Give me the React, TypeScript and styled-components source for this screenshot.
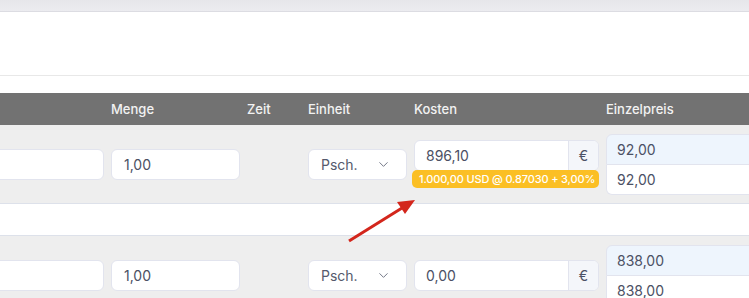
import React from 'react'
import styled, { createGlobalStyle } from 'styled-components'
import { ChevronDown } from 'lucide-react'

const Global = createGlobalStyle`
  html, body {
    margin: 0;
    padding: 0;
    background: #ffffff;
    overflow: hidden;
    font-family: Inter, "Noto Sans", sans-serif;
  }
`;

const Page = styled.div`
  position: relative;
  width: 749px;
  height: 298px;
  overflow: hidden;
`;

const TopBar = styled.div`
  height: 11px;
  background: linear-gradient(#e6e6ea, #ececf0);
  border-bottom: 1px solid #dcdce2;
`;

const Toolbar = styled.div`
  height: 63px;
  border-bottom: 1px solid #e8e8e8;
`;

const Spacer = styled.div`
  height: 17px;
`;

const Table = styled.div`
  margin-left: -20px;
`;

const Grid = styled.div<{ $height: number }>`
  display: grid;
  grid-template-columns: 124px 129px 54px 99px 185px 175px;
  column-gap: 7px;
  align-items: center;
  height: ${p => p.$height}px;
`;

const HeaderRow = styled(Grid)`
  background: #727272;
  color: #f2f2f2;
  font-size: 13px;
  font-weight: 500;
`;

const BodyRow = styled(Grid)`
  background: #eeeeee;
`;

const Band = styled.div`
  height: 31px;
  background: #ffffff;
  border-top: 1px solid #dde1ea;
  border-bottom: 1px solid #dde1ea;
`;

const Field = styled.div<{ $tint?: boolean }>`
  box-sizing: border-box;
  height: 31px;
  display: flex;
  align-items: center;
  padding: 0 12px;
  background: ${p => (p.$tint ? '#eef5fd' : '#ffffff')};
  border: 1px solid #e2e4ee;
  border-radius: 6px;
  color: #4b5064;
  font-size: 14px;
`;

const Select = styled(Field)`
  justify-content: space-between;
  padding-right: 15px;
  color: #555a6c;
  svg {
    color: #6b7080;
  }
`;

const Cost = styled.div`
  display: flex;
  flex-direction: column;
`;

const Group = styled.div`
  display: flex;
  height: 31px;
  box-sizing: border-box;
  border: 1px solid #e2e4ee;
  border-radius: 6px;
  overflow: hidden;
  background: #ffffff;
  color: #4b5064;
  font-size: 14px;
`;

const GroupInput = styled.div`
  flex: 1;
  display: flex;
  align-items: center;
  padding: 0 11px;
`;

const Addon = styled.div`
  width: 29px;
  display: flex;
  align-items: center;
  justify-content: center;
  background: #f4f6fa;
  border-left: 1px solid #e2e4ee;
`;

const Badge = styled.div`
  height: 18px;
  margin: -1px 0 0 -2px;
  display: flex;
  align-items: center;
  padding: 0 7px;
  background: #fbbf24;
  border-radius: 5px;
  color: #ffffff;
  font-size: 11px;
  letter-spacing: -0.15px;
  font-weight: 500;
  white-space: nowrap;
  overflow: hidden;
`;

const PriceStack = styled.div`
  display: flex;
  flex-direction: column;
`;

const PriceLine = styled.div<{ $tint?: boolean; $first?: boolean }>`
  display: flex;
  height: ${p => (p.$first ? 31 : 30)}px;
  box-sizing: border-box;
  border: 1px solid #e2e4ee;
  border-top-width: ${p => (p.$first ? 1 : 0)}px;
  border-radius: ${p => (p.$first ? '6px 0 0 0' : '0 0 0 6px')};
  background: ${p => (p.$tint ? '#eef5fd' : '#ffffff')};
  color: #4b5064;
  font-size: 14px;
`;

const PriceValue = styled.div`
  width: 126px;
  display: flex;
  align-items: center;
  padding: 0 10px;
  border-right: 1px solid #e2e4ee;
`;

const Arrow = styled.svg`
  position: absolute;
  left: 0;
  top: 0;
  pointer-events: none;
`;

type Row = { cost: string; price: string; badge?: string };

const rows: Row[] = [
  { cost: '896,10', price: '92,00', badge: '1.000,00 USD @ 0.87030 + 3,00%' },
  { cost: '0,00', price: '838,00' },
];

const LineRow = ({ row }: { row: Row }) => (
  <BodyRow $height={78}>
    <Field />
    <Field>1,00</Field>
    <div />
    <Select>
      Psch.
      <ChevronDown size={15} strokeWidth={1.5} />
    </Select>
    <Cost>
      <Group>
        <GroupInput>{row.cost}</GroupInput>
        <Addon>€</Addon>
      </Group>
      {row.badge && <Badge>{row.badge}</Badge>}
    </Cost>
    <PriceStack>
      <PriceLine $tint $first>
        <PriceValue>{row.price}</PriceValue>
      </PriceLine>
      <PriceLine>
        <PriceValue>{row.price}</PriceValue>
      </PriceLine>
    </PriceStack>
  </BodyRow>
);

export default function App() {
  return (
    <Page>
      <Global />
      <TopBar />
      <Toolbar />
      <Spacer />
      <Table>
        <HeaderRow $height={32}>
          <div />
          <div>Menge</div>
          <div>Zeit</div>
          <div>Einheit</div>
          <div>Kosten</div>
          <div>Einzelpreis</div>
        </HeaderRow>
        <LineRow row={rows[0]} />
        <Band />
        <LineRow row={rows[1]} />
      </Table>
      <Arrow width={749} height={298}>
        <line x1={349} y1={241} x2={402} y2={208} stroke="#d3261c" strokeWidth={3} />
        <polygon points="415,200 397,202 405,214" fill="#d3261c" />
      </Arrow>
    </Page>
  )
}
